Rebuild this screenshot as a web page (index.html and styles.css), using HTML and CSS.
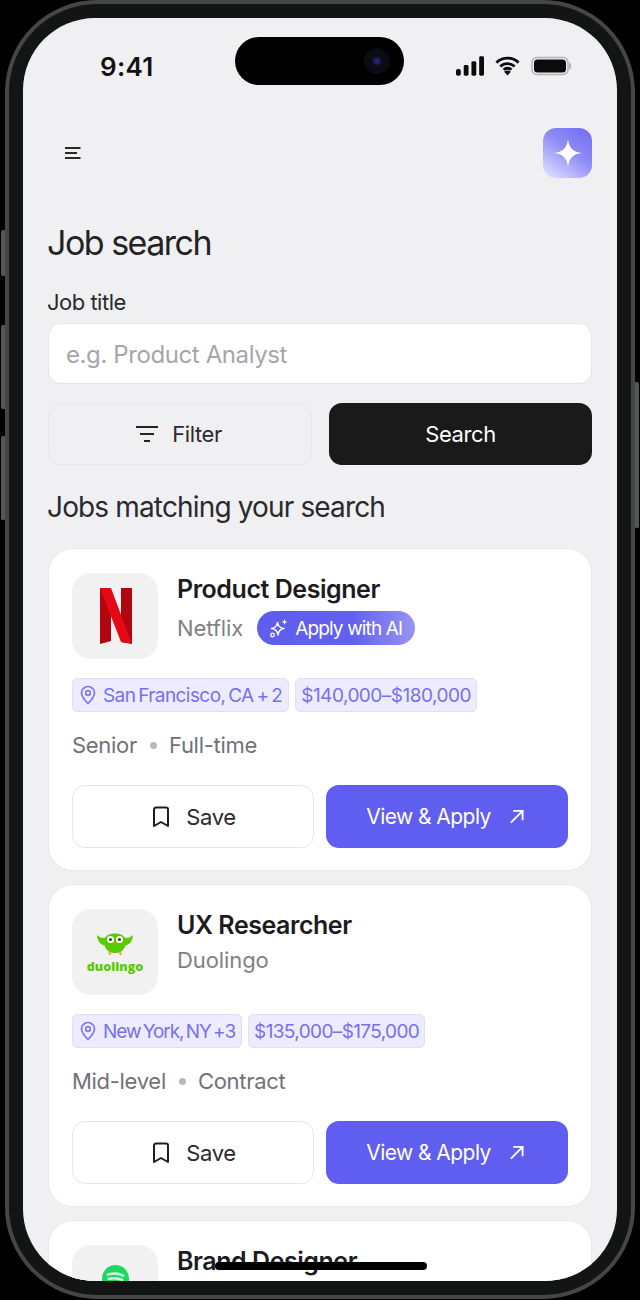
FILE: index.html
```html
<!DOCTYPE html>
<html lang="en">
<head>
<meta charset="utf-8">
<title>Job search</title>
<link rel="stylesheet" href="styles.css">
</head>
<body>
<div class="device">
  <span class="side side-a"></span><span class="side side-b"></span><span class="side side-c"></span><span class="side side-d"></span>
  <main class="screen">
    <div class="island"><span class="lens"></span></div>
    <div class="home-bar"></div>
    <div class="status">
      <span class="time">9:41</span>
      <div class="status-icons">
        <svg width="28" height="20" viewBox="0 0 29 20"><rect x="0" y="13" width="5" height="7" rx="2"/><rect x="8" y="9" width="5" height="11" rx="1.5"/><rect x="16" y="5" width="5" height="15" rx="1.5"/><rect x="24" y="0" width="5" height="20" rx="1.5"/></svg>
        <svg width="25" height="20" viewBox="0 0 26 20"><path d="M1.500 6.500A16.500 16.500 0 0 1 24.500 6.500M5.500 10.500A11 11 0 0 1 20.500 10.500M9 14A5.500 5.500 0 0 1 17 14" fill="none" stroke="#0b0b0c" stroke-width="3"/><path d="M13 20l-3.500-4a5 5 0 0 1 7 0z"/></svg>
        <svg width="40" height="20" viewBox="0 0 40 20"><rect x="1" y="1.500" width="36" height="17" rx="5" fill="none" stroke="#b4b4b6" stroke-width="1.500"/><rect x="3" y="3.500" width="32" height="13" rx="3.500"/><rect x="38" y="7" width="2" height="6" rx="1" fill="#b4b4b6"/></svg>
      </div>
    </div>
    <header class="topbar">
      <svg class="menu" width="16" height="12" viewBox="0 0 16 12"><path d="M0 1h15.500M0 6h12M0 11h15.500" stroke="#2a2a2d" stroke-width="2"/></svg>
      <div class="spark-tile"><svg width="30" height="30" viewBox="0 0 30 30"><path d="M15 1C16 10 20 14 29 15C20 16 16 20 15 29C14 20 10 16 1 15C10 14 14 10 15 1Z" fill="#fff"/></svg></div>
    </header>
    <h1>Job search</h1>
    <label class="field-label" for="job">Job title</label>
    <input class="field" id="job" placeholder="e.g. Product Analyst">
    <div class="search-actions">
      <button class="btn btn-filter"><svg width="24" height="18" viewBox="0 0 24 18"><path d="M1 2h22M5 9h14M9 16h6" stroke="#232326" stroke-width="2.200"/></svg>Filter</button>
      <button class="btn btn-search">Search</button>
    </div>
    <h2>Jobs matching your search</h2>
    <section class="job-card">
      <div class="job-head">
        <div class="logo">
          <svg class="netflix" width="32" height="56" viewBox="0 0 32 56"><path d="M0 0h11v53l-11 3z" fill="#b1060f"/><path d="M21 0h11v56l-11-2z" fill="#b1060f"/><path d="M0 0h11l21 56c-4-1-7-1.500-11-2z" fill="#e50914"/></svg>
        </div>
        <div class="job-title">
          <h3>Product Designer</h3>
          <div class="company-row"><span class="company">Netflix</span>
            <span class="ai-pill"><svg width="20" height="20" viewBox="0 0 20 20"><path d="M8.500 4.500C9 8 11 10 15 10.500C11 11 9.500 13 9 17C8.500 13 6.500 11 2.500 10.500C6 10 8 8 8.500 4.500Z" fill="none" stroke="#fff" stroke-width="1.600" stroke-linejoin="round"/><path d="M15.500 1l.8 2.200 2.200.8-2.200.8-.8 2.200-.8-2.200-2.200-.8 2.200-.8z" fill="#fff"/><circle cx="3.500" cy="17" r="1.800" fill="none" stroke="#fff" stroke-width="1.300"/></svg>Apply with AI</span></div>
        </div>
      </div>
      <div class="tags">
        <span class="tag tag-sf"><svg class="pin" width="16" height="20" viewBox="0 0 16 20"><path d="M8 18.500C4 14.500 1.500 11.500 1.500 8a6.500 6.500 0 0 1 13 0c0 3.500-2.500 6.500-6.500 10.500Z" fill="none" stroke="#7d78f2" stroke-width="1.700"/><circle cx="8" cy="8" r="2.300" fill="none" stroke="#7d78f2" stroke-width="1.700"/></svg>San Francisco, CA + 2</span>
        <span class="tag tag-pay">$140,000–$180,000</span>
      </div>
      <div class="meta"><span>Senior</span><i class="dot"></i><span>Full-time</span></div>
      <div class="job-actions">
        <button class="btn btn-save"><svg width="18" height="22" viewBox="0 0 18 22"><path d="M2 3.500A2 2 0 0 1 4 1.500h10a2 2 0 0 1 2 2V20l-7-4-7 4Z" fill="none" stroke="#1e1e20" stroke-width="2" stroke-linejoin="round"/></svg>Save</button>
        <button class="btn btn-apply">View &amp; Apply<svg width="15" height="15" viewBox="0 0 16 16"><path d="M2 14.500L14 2.500M4.500 2h10v10" fill="none" stroke="#fff" stroke-width="2"/></svg></button>
      </div>
    </section>
    <section class="job-card">
      <div class="job-head">
        <div class="logo logo-duo">
          <svg width="36" height="26" viewBox="0 0 36 26"><path d="M0 4C3 7 6 7.500 8.500 6.500C11 1 25 1 27.500 6.500C30 7.500 33 7 36 4C35.500 10 33 13.500 28.500 14.500C27 19.500 23 22 18 22C13 22 9 19.500 7.500 14.500C3 13.500 .5 10 0 4Z" fill="#58cc02"/><circle cx="13.500" cy="8.500" r="3.500" fill="#fff"/><circle cx="22.500" cy="8.500" r="3.500" fill="#fff"/><circle cx="13.500" cy="8.500" r="1.600" fill="#4b3a1a"/><circle cx="22.500" cy="8.500" r="1.600" fill="#4b3a1a"/><path d="M16 11.500h4L18 14.500Z" fill="#f49000"/><path d="M11 21.500h3.500l-1.500 3zM21.500 21.500H25l-1.500 3z" fill="#f49000"/></svg>
          <span class="duo-word">duolingo</span>
        </div>
        <div class="job-title">
          <h3>UX Researcher</h3>
          <div class="company-row"><span class="company">Duolingo</span></div>
        </div>
      </div>
      <div class="tags">
        <span class="tag tag-ny"><svg class="pin" width="16" height="20" viewBox="0 0 16 20"><path d="M8 18.500C4 14.500 1.500 11.500 1.500 8a6.500 6.500 0 0 1 13 0c0 3.500-2.500 6.500-6.500 10.500Z" fill="none" stroke="#7d78f2" stroke-width="1.700"/><circle cx="8" cy="8" r="2.300" fill="none" stroke="#7d78f2" stroke-width="1.700"/></svg>New York, NY +3</span>
        <span class="tag tag-pay-alt">$135,000–$175,000</span>
      </div>
      <div class="meta"><span>Mid-level</span><i class="dot"></i><span>Contract</span></div>
      <div class="job-actions">
        <button class="btn btn-save"><svg width="18" height="22" viewBox="0 0 18 22"><path d="M2 3.500A2 2 0 0 1 4 1.500h10a2 2 0 0 1 2 2V20l-7-4-7 4Z" fill="none" stroke="#1e1e20" stroke-width="2" stroke-linejoin="round"/></svg>Save</button>
        <button class="btn btn-apply">View &amp; Apply<svg width="15" height="15" viewBox="0 0 16 16"><path d="M2 14.500L14 2.500M4.500 2h10v10" fill="none" stroke="#fff" stroke-width="2"/></svg></button>
      </div>
    </section>
    <section class="job-card">
      <div class="job-head">
        <div class="logo logo-spotify">
          <svg width="27" height="27" viewBox="0 0 28 28"><circle cx="14" cy="14" r="14" fill="#1ed760"/><path d="M6 10c6-2 11-1.500 16 1M7 14.500c5-1.500 9-1 14 1M8 19c4-1 8-.5 11 1" fill="none" stroke="#d8f8e4" stroke-width="2.400" stroke-linecap="round"/></svg>
        </div>
        <div class="job-title">
          <h3>Brand Designer</h3>
        </div>
      </div>
    </section>
  </main>
</div>
</body>
</html>
```
FILE: styles.css
```css
* { box-sizing: border-box; }
html, body { margin: 0; height: 1300px; background: #000; overflow: hidden; }
body { font-family: Inter, "Liberation Sans", sans-serif; color: #1c1c1f; }

.device {
  position: relative;
  width: 630px;
  height: 1299px;
  margin-left: 5px;
  padding: 14px;
  background: #131414;
  border: 4px solid #454646;
  border-radius: 92px;
}
.side { position: absolute; width: 4px; background: #565656; border-radius: 2px 0 0 2px; }
.side-a { left: -8px; top: 226px; height: 46px; }
.side-b { left: -8px; top: 321px; height: 84px; }
.side-c { left: -8px; top: 432px; height: 84px; }
.side-d { right: -8px; top: 378px; height: 146px; border-radius: 0 2px 2px 0; }

.screen {
  position: relative;
  height: 1263px;
  padding: 0 25px;
  background: #f0f0f3;
  border-radius: 72px;
  overflow: hidden;
}
.island {
  position: absolute;
  left: 212px; top: 19px;
  width: 169px; height: 48px;
  background: #000;
  border-radius: 24px;
}
.lens {
  position: absolute; right: 14px; top: 11px;
  width: 26px; height: 26px; border-radius: 50%;
  background: radial-gradient(circle, #24206a 0 2px, #0c0c18 5px, #0a0a10 70%, #000 100%);
}
.home-bar {
  position: absolute;
  left: 192px; bottom: 11px;
  width: 212px; height: 8px;
  background: #000;
  border-radius: 4px;
  z-index: 2;
}
.status { display: flex; justify-content: space-between; align-items: center; height: 32px; margin-right: -1px; padding: 32px 22px 0 52px; box-sizing: content-box; }
.time { font-size: 26px; font-weight: 600; letter-spacing: 0.3px; color: #111113; }
.status-icons { display: flex; align-items: center; gap: 11px; }
.status-icons svg { fill: #0b0b0c; display: block; }

.topbar { display: flex; justify-content: space-between; align-items: center; height: 50px; margin-top: 46px; padding-left: 17px; }
.menu { display: block; }
.spark-tile {
  width: 49px; height: 50px; border-radius: 13px;
  display: flex; align-items: center; justify-content: center;
  background: linear-gradient(215deg, #6f6bf4 0%, #8f8cf6 45%, #e6e5fd 100%);
}
h1 { margin: 44px 0 0 -1px; font-size: 34px; line-height: 41px; font-weight: 400; letter-spacing: -1.5px; color: #232326; }
.field-label { display: block; margin-top: 25px; margin-left: -1px; font-size: 22px; line-height: 28px; letter-spacing: -0.5px; font-weight: 400; color: #2a2a2d; }
.field {
  display: block; width: 100%; height: 61px; margin-top: 7px; padding: 2px 17px 0;
  font: 400 24px Inter, sans-serif; letter-spacing: -0.4px;
  background: #fff; border: 1px solid #e4e5e8; border-radius: 13px; outline: 0;
}
.field::placeholder { color: #a5a6aa; opacity: 1; }
.search-actions { display: grid; grid-template-columns: 264px 1fr; gap: 17px; margin-top: 19px; }
.btn {
  display: flex; align-items: center; justify-content: center;
  font: 400 22px Inter, sans-serif; letter-spacing: -0.4px;
  border-radius: 13px; border: 0; padding: 0;
}
.btn-filter { height: 62px; gap: 13px; padding-right: 3px; background: #f0f0f3; border: 1px solid #e6e7ea; color: #2a2a2d; }
.btn-search { height: 62px; background: #1a1a1b; color: #fff; }
h2 { margin: 24px 0 0 -1px; font-size: 28px; line-height: 36px; font-weight: 400; letter-spacing: -0.85px; color: #2a2a2d; }

.job-card { margin-top: 13px; padding: 24px 23px 22px; background: #fff; border: 1px solid #e8e9ec; border-radius: 25px; }
h2 + .job-card { margin-top: 23px; }
.job-head { display: flex; gap: 19px; }
.logo { width: 86px; height: 86px; flex: none; border-radius: 19px; background: #f1f1f2; display: flex; flex-direction: column; align-items: center; justify-content: center; }
.netflix { margin-left: 2px; }
.logo-duo { gap: 3px; }
.duo-word { font: 800 12.500px "Open Sans", sans-serif; line-height: 14px; color: #58cc02; }
.logo-spotify { justify-content: flex-start; padding-top: 20px; }
h3 { margin: 0; font-size: 25px; line-height: 32px; font-weight: 600; letter-spacing: -0.45px; color: #1c1c1f; }
.company-row { display: flex; align-items: center; gap: 14px; margin-top: 6px; }
.company { font-size: 22px; line-height: 26px; letter-spacing: -0.1px; color: #7f8084; }
.ai-pill {
  display: inline-flex; align-items: center; gap: 6px; height: 34px; padding: 0 13px 0 12px;
  font-size: 19px; letter-spacing: -0.85px; color: #fff; border-radius: 17px;
  background: linear-gradient(90deg, #5f5ded 0%, #6360ee 60%, #9794f4 100%);
}
.tags { display: flex; gap: 6px; margin-top: 19px; }
.tag {
  display: inline-flex; align-items: center; gap: 7px; height: 34px; padding: 0 6px 0 7px;
  font-size: 19px; color: #7571ee;
  background: #edecfd; border: 1px solid #e0dff9; border-radius: 5px;
}
.tag-sf { letter-spacing: -0.57px; word-spacing: -2px; }
.tag-ny { letter-spacing: -1.07px; word-spacing: -2px; }
.tag-pay { padding: 0 5px; letter-spacing: -0.5px; }
.tag-pay-alt { padding: 0 5px; letter-spacing: -0.62px; }
.pin { display: block; }
.meta { display: flex; align-items: center; gap: 13px; height: 32px; margin-top: 17px; font-size: 22px; letter-spacing: -0.3px; color: #717276; }
.dot { width: 7px; height: 7px; margin-right: -1px; border-radius: 50%; background: #b7b8bb; }
.job-actions { display: grid; grid-template-columns: 1fr 1fr; gap: 12px; margin-top: 24px; }
.btn-save { height: 63px; gap: 16px; padding-left: 2px; background: #fff; border: 1px solid #e5e6e8; color: #2a2a2d; }
.btn-apply { height: 63px; gap: 18px; padding-right: 4px; font-size: 21px; letter-spacing: -0.55px; background: #5f5ef1; color: #fff; }
```
